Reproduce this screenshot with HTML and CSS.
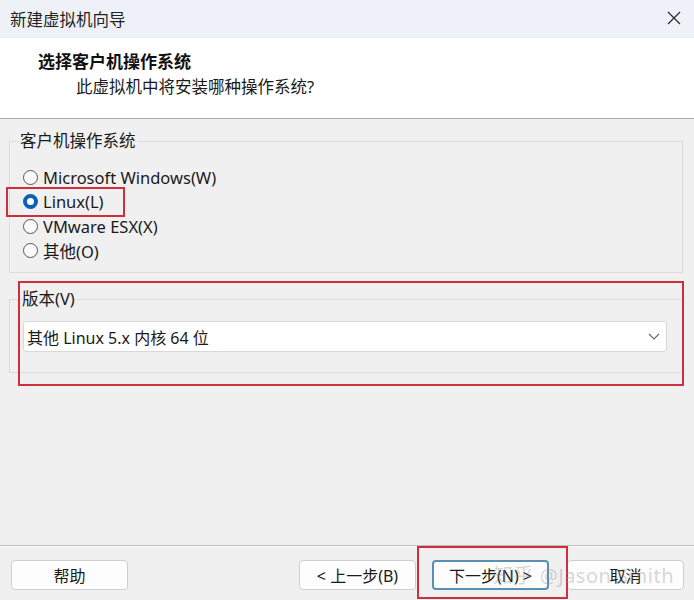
FILE: index.html
```html
<!DOCTYPE html>
<html lang="zh-CN">
<head>
<meta charset="utf-8">
<title>新建虚拟机向导</title>
<link rel="stylesheet" href="styles.css">
</head>
<body>
<div class="window">
  <div class="titlebar">
    <span class="title">新建虚拟机向导</span>
    <svg class="close" width="14" height="14" viewBox="0 0 14 14"><path d="M1 1L13 13M13 1L1 13" stroke="#2b2b2b" stroke-width="1.3" fill="none"/></svg>
  </div>
  <div class="header">
    <div class="h-title">选择客户机操作系统</div>
    <div class="h-sub">此虚拟机中将安装哪种操作系统?</div>
  </div>
  <div class="content">
    <fieldset class="group group-os">
      <legend>客户机操作系统</legend>
      <div class="radio"><span class="dot"></span>Microsoft Windows(W)</div>
      <div class="radio"><span class="dot on"></span>Linux(L)</div>
      <div class="radio"><span class="dot"></span>VMware ESX(X)</div>
      <div class="radio"><span class="dot"></span>其他(O)</div>
    </fieldset>
    <fieldset class="group group-ver">
      <legend>版本(V)</legend>
      <div class="select">
        <span>其他 Linux 5.x 内核 64 位</span>
        <svg width="12" height="7" viewBox="0 0 12 7"><path d="M1 1L6 6L11 1" stroke="#6a6a6a" stroke-width="1.2" fill="none"/></svg>
      </div>
    </fieldset>
  </div>
  <div class="footer">
    <button class="btn">帮助</button>
    <div class="spacer"></div>
    <button class="btn">&lt; 上一步(B)</button>
    <button class="btn focus">下一步(N) &gt;</button>
    <button class="btn">取消</button>
  </div>
  <div class="mark mark1"></div>
  <div class="mark mark2"></div>
  <div class="mark mark3"></div>
  <div class="watermark">知乎 @Jason Smith</div>
</div>
</body>
</html>
```
FILE: styles.css
```css
* { box-sizing: border-box; }
html, body { margin: 0; padding: 0; }
body {
  font-family: "Noto Sans", "Noto Sans CJK SC", sans-serif;
  color: #1a1a1a;
  background: #f0f0f0;
}
.window {
  position: relative;
  width: 694px;
  height: 600px;
  display: flex;
  flex-direction: column;
  overflow: hidden;
}
.titlebar {
  height: 38px;
  background: #eef2f8;
  display: flex;
  align-items: center;
  justify-content: space-between;
  padding: 0 13px 0 10px;
  font-size: 16.5px;
  color: #222;
}
.close { margin-top: -2px; }
.header {
  height: 81px;
  background: #fff;
  border-bottom: 1px solid #a8a8a8;
  box-shadow: 0 1px 0 #fbfbfb;
  padding: 11px 0 0 38px;
}
.h-title {
  font-weight: bold;
  font-size: 17px;
  line-height: 26px;
  color: #111;
}
.h-sub {
  font-size: 16.5px;
  line-height: 24px;
  padding-left: 38px;
  color: #1a1a1a;
}
.content {
  flex: 1;
  background: #f0f0f0;
  padding: 11px 11px 0 9px;
  font-size: 16.5px;
}
.group {
  margin: 0;
  border: 1px solid #dcdcdc;
  padding: 0;
  min-width: 0;
}
.group legend {
  padding: 0 2px 0 0;
  line-height: 22px;
  color: #1a1a1a;
}
.group-os {
  height: 143px;
  padding: 13px 0 0 13px;
}
.group-os legend { margin-left: -3px; }
.radio {
  display: flex;
  align-items: center;
  height: 24.5px;
  gap: 5px;
  color: #1a1a1a;
}
.dot {
  width: 15px;
  height: 15px;
  border-radius: 50%;
  border: 1px solid #555;
  background: #fafafa;
}
.dot.on {
  border: 4px solid #0a62b8;
  background: #fff;
}
.group-ver {
  margin-top: 15px;
  height: 85px;
  padding: 11px 15px 0 13px;
}
.group-ver legend { margin-left: -1px; }
.select {
  height: 31px;
  background: #fff;
  border: 1px solid #d8d8d8;
  border-radius: 3px;
  display: flex;
  align-items: center;
  justify-content: space-between;
  padding: 0 6px 0 3px;
  font-size: 16px;
}
.footer {
  height: 55px;
  border-top: 1px solid #bdbdbd;
  box-shadow: inset 0 1px 0 #fafafa;
  display: flex;
  align-items: flex-start;
  padding: 14px 10px 0 11px;
  gap: 16px;
}
.spacer { flex: 1; }
.btn {
  width: 117px;
  height: 30px;
  background: #fdfdfd;
  border: 1px solid #cfcfcf;
  border-radius: 4px;
  font-family: "Noto Sans", "Noto Sans CJK SC", sans-serif;
  font-size: 16px;
  color: #1a1a1a;
  padding: 0;
  margin: 0;
}
.btn.focus {
  border: 2px solid #5a8fb5;
}
.btn:last-child { margin-left: 2px; }
.mark {
  position: absolute;
  border: 2px solid #cf2f3d;
}
.mark1 { left: 6px; top: 187px; width: 119px; height: 30px; }
.mark2 { left: 18px; top: 281px; width: 666px; height: 105px; }
.mark3 { left: 417px; top: 546px; width: 151px; height: 53px; }
.watermark {
  position: absolute;
  left: 493px;
  top: 560px;
  font-size: 20px;
  color: rgba(140, 140, 140, 0.35);
  letter-spacing: 0.5px;
}
```
